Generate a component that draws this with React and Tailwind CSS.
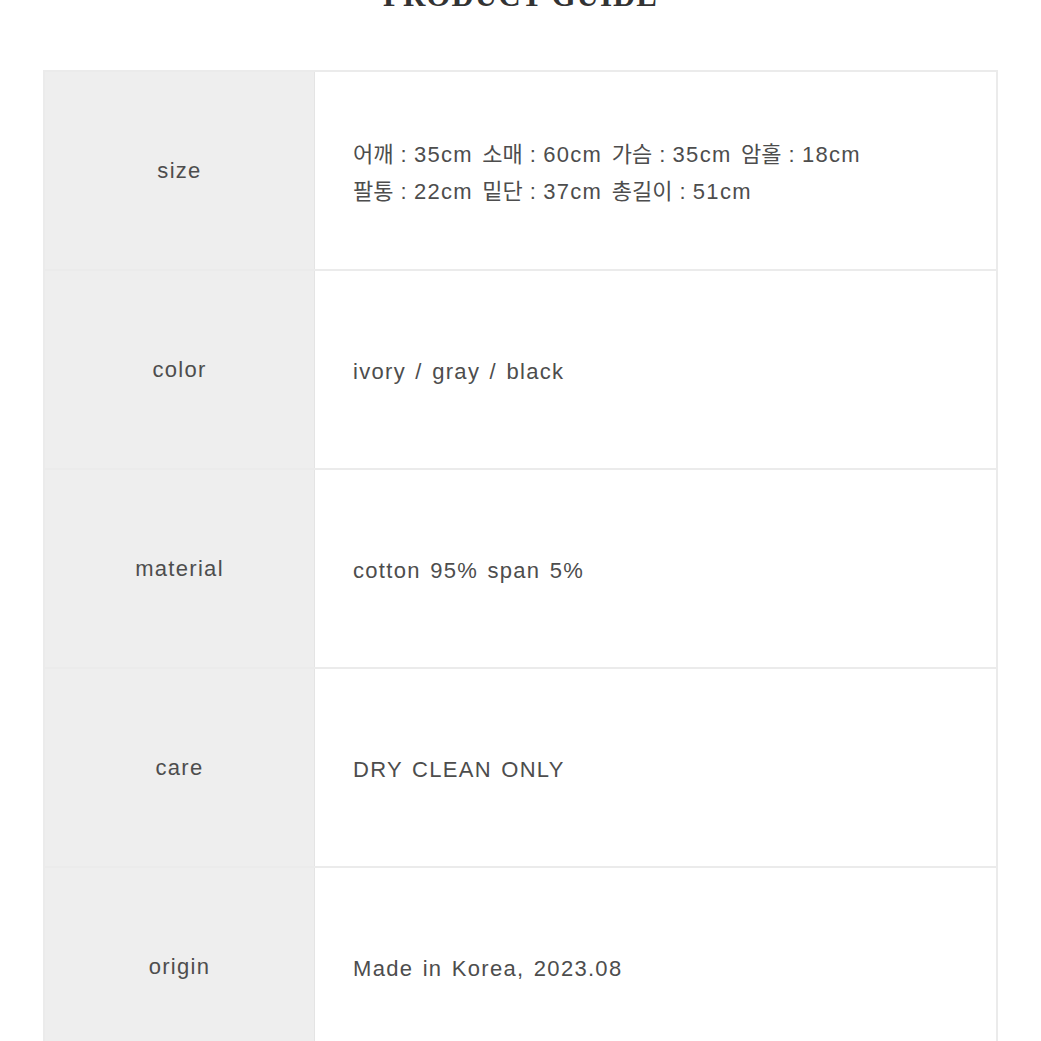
import React from 'react';

const rows = [
  { label: 'size', lines: ['어깨:35cm 소매:60cm 가슴:35cm 암홀:18cm', '팔통:22cm 밑단:37cm 총길이:51cm'] },
  { label: 'color', lines: ['ivory / gray / black'] },
  { label: 'material', lines: ['cotton 95% span 5%'] },
  { label: 'care', lines: ['DRY CLEAN ONLY'] },
  { label: 'origin', lines: ['Made in Korea, 2023.08'] },
];

// Hangul sits tight, colons get the wide spacing of a Korean font
const renderLine = (text) =>
  text.split(/([가-힣]+|:)/).map((part, k) => {
    if (part === ':') return <span key={k} className="ml-[7px] mr-[6px]">:</span>;
    if (/[가-힣]/.test(part)) return <span key={k} className="tracking-normal">{part}</span>;
    return <span key={k}>{part}</span>;
  });

const App = () => {
  return (
    <div className="min-h-screen bg-white overflow-hidden font-['Liberation_Sans','Noto_Sans_CJK_KR',sans-serif]">
      {/* ── Title ── */}
      <h2 className="text-center text-[31px] leading-[30px] -mt-[19px] mb-[59px] font-bold tracking-[1px] text-[#333] font-['Liberation_Serif',serif]">
        PRODUCT GUIDE
      </h2>

      {/* ── Guide table ── */}
      <div className="mx-[43px] border-x-2 border-[#ebebeb]">
        {rows.map((r, i) => (
          <div key={i} className="grid grid-cols-[270px_1fr] h-[199px] border-t-2 border-[#ebebeb]">
            <div className="bg-[#eeeeee] border-r border-[#e4e4e4] flex items-center justify-center text-[22px] tracking-[1.3px] text-[#4d4d4d]">
              {r.label}
            </div>
            <div className="flex flex-col justify-center pt-[4px] pl-[38px] text-[22px] leading-[37px] tracking-[1.3px] [word-spacing:2px] text-[#4d4d4d]">
              {r.lines.map((l, j) => <p key={j} className="m-0">{renderLine(l)}</p>)}
            </div>
          </div>
        ))}
      </div>
    </div>
  );
};

export default App;
